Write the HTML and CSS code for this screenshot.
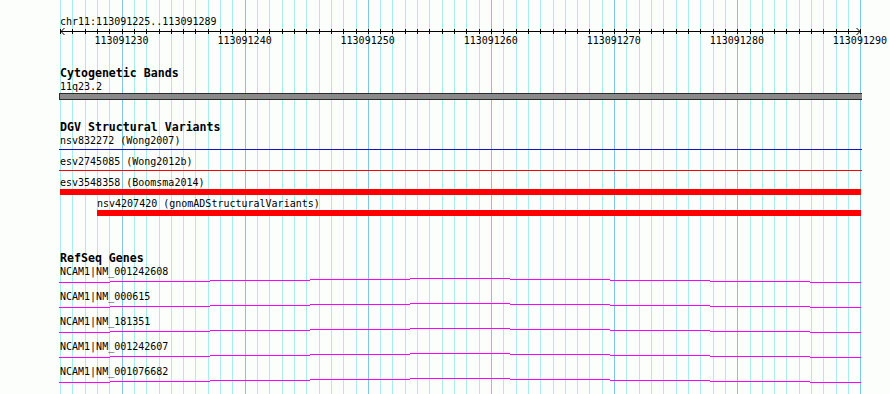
FILE: index.html
```html
<!DOCTYPE html>
<html lang="en">
<head>
<meta charset="utf-8">
<title>Genome browser</title>
<link rel="stylesheet" href="styles.css">
</head>
<body>
<div class="view">
  <div class="grid">
    <i class="gl"></i><i class="gl"></i><i class="gl"></i><i class="gl"></i><i class="gl"></i><i class="gl mj"></i><i class="gl"></i><i class="gl"></i><i class="gl"></i><i class="gl"></i>
    <i class="gl"></i><i class="gl"></i><i class="gl"></i><i class="gl"></i><i class="gl"></i><i class="gl mj"></i><i class="gl"></i><i class="gl"></i><i class="gl"></i><i class="gl"></i>
    <i class="gl"></i><i class="gl"></i><i class="gl"></i><i class="gl"></i><i class="gl"></i><i class="gl mj"></i><i class="gl"></i><i class="gl"></i><i class="gl"></i><i class="gl"></i>
    <i class="gl"></i><i class="gl"></i><i class="gl"></i><i class="gl"></i><i class="gl"></i><i class="gl mj"></i><i class="gl"></i><i class="gl"></i><i class="gl"></i><i class="gl"></i>
    <i class="gl"></i><i class="gl"></i><i class="gl"></i><i class="gl"></i><i class="gl"></i><i class="gl mj"></i><i class="gl"></i><i class="gl"></i><i class="gl"></i><i class="gl"></i>
    <i class="gl"></i><i class="gl"></i><i class="gl"></i><i class="gl"></i><i class="gl"></i><i class="gl mj"></i><i class="gl"></i><i class="gl"></i><i class="gl"></i><i class="gl"></i>
    <i class="gl"></i><i class="gl"></i><i class="gl"></i><i class="gl"></i><i class="gl"></i>
  </div>

  <div class="tracks">
    <div class="ruler">
      <div class="loc">chr11:113091225..113091289</div>
      <div class="scale">
        <div class="ticks">
          <i class="tk"></i><i class="tk"></i><i class="tk"></i><i class="tk"></i><i class="tk"></i><i class="tk"></i><i class="tk"></i><i class="tk"></i><i class="tk"></i><i class="tk"></i>
          <i class="tk"></i><i class="tk"></i><i class="tk"></i><i class="tk"></i><i class="tk"></i><i class="tk"></i><i class="tk"></i><i class="tk"></i><i class="tk"></i><i class="tk"></i>
          <i class="tk"></i><i class="tk"></i><i class="tk"></i><i class="tk"></i><i class="tk"></i><i class="tk"></i><i class="tk"></i><i class="tk"></i><i class="tk"></i><i class="tk"></i>
          <i class="tk"></i><i class="tk"></i><i class="tk"></i><i class="tk"></i><i class="tk"></i><i class="tk"></i><i class="tk"></i><i class="tk"></i><i class="tk"></i><i class="tk"></i>
          <i class="tk"></i><i class="tk"></i><i class="tk"></i><i class="tk"></i><i class="tk"></i><i class="tk"></i><i class="tk"></i><i class="tk"></i><i class="tk"></i><i class="tk"></i>
          <i class="tk"></i><i class="tk"></i><i class="tk"></i><i class="tk"></i><i class="tk"></i><i class="tk"></i><i class="tk"></i><i class="tk"></i><i class="tk"></i><i class="tk"></i>
          <i class="tk"></i><i class="tk"></i><i class="tk"></i><i class="tk"></i><i class="tk"></i>
        </div>
        <svg class="axis" width="803" height="7" viewBox="0 0 803 7">
          <rect x="0" y="3" width="801" height="1" fill="#000"/>
          <path d="M4.5 0 L1 3.5 L4.5 7" fill="none" stroke="#000" stroke-width="1"/>
          <path d="M796.5 0 L800 3.5 L796.5 7" fill="none" stroke="#000" stroke-width="1"/>
        </svg>
      </div>
      <div class="labels">
        <span class="lab">113091230</span>
        <span class="lab">113091240</span>
        <span class="lab">113091250</span>
        <span class="lab">113091260</span>
        <span class="lab">113091270</span>
        <span class="lab">113091280</span>
        <span class="lab">113091290</span>
      </div>
    </div>

    <section class="track">
      <h2 class="track-title">Cytogenetic Bands</h2>
      <div class="feat">
        <div class="flabel">11q23.2</div>
        <div class="band"></div>
      </div>
    </section>

    <section class="track">
      <h2 class="track-title">DGV Structural Variants</h2>
      <div class="feat">
        <div class="flabel">nsv832272 (Wong2007)</div>
        <div class="garea"><div class="thin blue"></div></div>
      </div>
      <div class="feat">
        <div class="flabel">esv2745085 (Wong2012b)</div>
        <div class="garea"><div class="thin red"></div></div>
      </div>
      <div class="feat">
        <div class="flabel">esv3548358 (Boomsma2014)</div>
        <div class="garea"><div class="thick"></div></div>
      </div>
      <div class="feat indent">
        <div class="flabel">nsv4207420 (gnomADStructuralVariants)</div>
        <div class="garea"><div class="thick short"></div></div>
      </div>
    </section>

    <section class="track genes">
      <h2 class="track-title">RefSeq Genes</h2>
      <div class="gene">
        <div class="flabel">NCAM1|NM_001242608</div>
        <svg class="intron" width="802" height="13" viewBox="0 0 802 13"><path d="M0 5.5H51M51 4.5H151M151 3.5H251M251 2.5H351M351 1.5H451M451 2.5H551M551 3.5H651M651 4.5H751M751 5.5H802" fill="none" stroke="#ff00ff" stroke-width="1"/></svg>
      </div>
      <div class="gene">
        <div class="flabel">NCAM1|NM_000615</div>
        <svg class="intron" width="802" height="13" viewBox="0 0 802 13"><path d="M0 5.5H51M51 4.5H151M151 3.5H251M251 2.5H351M351 1.5H451M451 2.5H551M551 3.5H651M651 4.5H751M751 5.5H802" fill="none" stroke="#ff00ff" stroke-width="1"/></svg>
      </div>
      <div class="gene">
        <div class="flabel">NCAM1|NM_181351</div>
        <svg class="intron" width="802" height="13" viewBox="0 0 802 13"><path d="M0 5.5H51M51 4.5H151M151 3.5H251M251 2.5H351M351 1.5H451M451 2.5H551M551 3.5H651M651 4.5H751M751 5.5H802" fill="none" stroke="#ff00ff" stroke-width="1"/></svg>
      </div>
      <div class="gene">
        <div class="flabel">NCAM1|NM_001242607</div>
        <svg class="intron" width="802" height="13" viewBox="0 0 802 13"><path d="M0 5.5H51M51 4.5H151M151 3.5H251M251 2.5H351M351 1.5H451M451 2.5H551M551 3.5H651M651 4.5H751M751 5.5H802" fill="none" stroke="#ff00ff" stroke-width="1"/></svg>
      </div>
      <div class="gene">
        <div class="flabel">NCAM1|NM_001076682</div>
        <svg class="intron" width="802" height="13" viewBox="0 0 802 13"><path d="M0 5.5H51M51 4.5H151M151 3.5H251M251 2.5H351M351 1.5H451M451 2.5H551M551 3.5H651M651 4.5H751M751 5.5H802" fill="none" stroke="#ff00ff" stroke-width="1"/></svg>
      </div>
    </section>
  </div>
</div>
</body>
</html>
```

FILE: styles.css
```css
* {
  box-sizing: border-box;
  margin: 0;
  padding: 0;
}

html,
body {
  width: 890px;
  height: 394px;
  overflow: hidden;
}

body {
  background: #fcfefc;
  color: #000;
  font: 10px/12px "DejaVu Sans Mono", monospace;
}

.view {
  display: grid;
  width: 890px;
  height: 394px;
}

.grid,
.tracks {
  grid-area: 1 / 1;
}

/* background grid: one column per base */
.grid {
  display: flex;
  width: 801px;
  height: 394px;
  margin-left: 60px;
  border-right: 1px solid #80c4e6;
}

.gl {
  flex: 1 1 0;
  border-left: 1px solid #a8ecec;
}

.gl.mj {
  border-left-color: #80c4e6;
}

.tracks {
  padding-left: 60px;
  display: flex;
  flex-direction: column;
  align-items: flex-start;
}

/* ruler */
.loc {
  margin-top: 15px;
  height: 13px;
  padding-top: 1px;
  white-space: nowrap;
}

.scale {
  display: grid;
  height: 7px;
}

.ticks,
.axis {
  grid-area: 1 / 1;
}

.ticks {
  display: flex;
  width: 801px;
  height: 5px;
  margin-top: 1px;
  border-right: 1px solid #000;
}

.tk {
  flex: 1 1 0;
  border-left: 1px solid #000;
}

.axis {
  display: block;
}

.labels {
  display: flex;
  height: 12px;
  white-space: nowrap;
}

.lab {
  flex: none;
  width: 123.077px;
  display: flex;
  justify-content: center;
}

/* tracks */
.track {
  margin-top: 20px;
}

.track.genes {
  margin-top: 34px;
}

.track-title {
  font: bold 11.6px/13px "DejaVu Sans Mono", monospace;
  white-space: nowrap;
}

.flabel {
  height: 12px;
  padding-top: 1px;
  white-space: nowrap;
}

.feat {
  height: 21px;
}

.feat.indent {
  margin-left: 37px;
}

.band {
  margin-top: 1px;
  margin-left: -1px;
  width: 803px;
  height: 7px;
  background: #8a8a8a;
  border-top: 1px solid #2b2b2b;
  border-bottom: 1px solid #2b2b2b;
  border-left: 1px solid #2b2b2b;
}

.garea {
  height: 9px;
}

.thin {
  margin-top: 3px;
  margin-left: -1px;
  width: 803px;
  height: 1px;
}

.thin.blue {
  background: #1414c4;
}

.thin.red {
  background: #ff0000;
}

.thick {
  margin-top: 1px;
  width: 801px;
  height: 6px;
  background: #ff0000;
}

.thick.short {
  width: 764px;
}

.gene {
  height: 25px;
}

.intron {
  display: block;
  margin-left: -1px;
}
```
